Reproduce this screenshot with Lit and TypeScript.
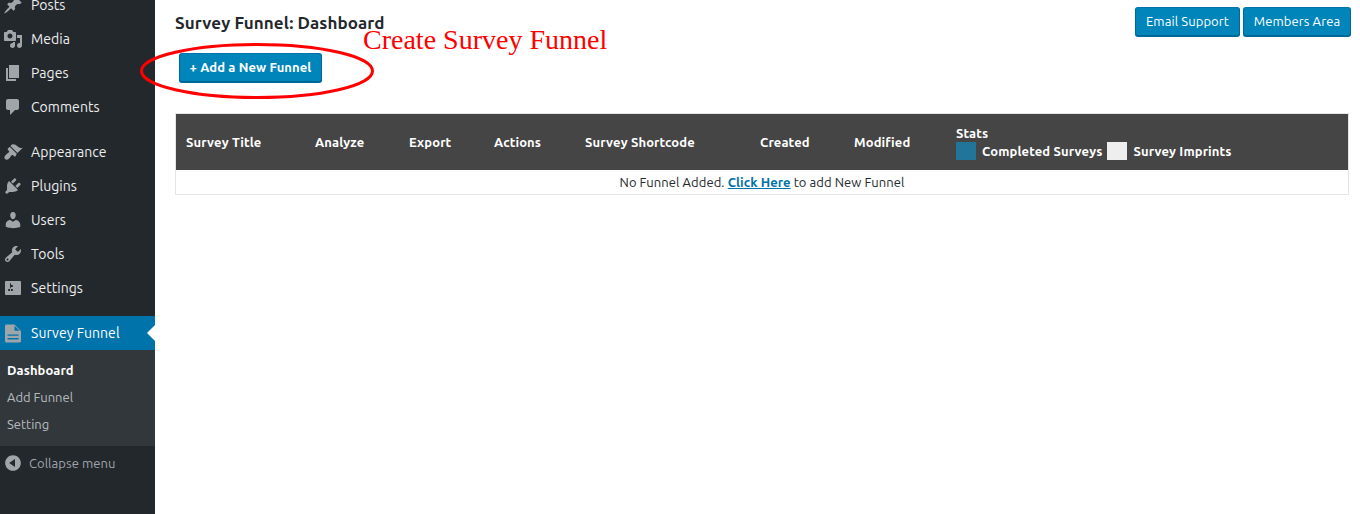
import { LitElement, html, css, svg } from "lit";
import { customElement } from "lit/decorators.js";

const ICONS: Record<string, string> = {
  post: "M10.44 3.02l1.82-1.82 6.36 6.35-1.83 1.82c-1.05-.68-2.48-.57-3.41.36l-.75.75c-.92.93-1.04 2.35-.35 3.41l-1.83 1.82-2.41-2.41-2.8 2.79c-.42.42-3.38 2.71-3.8 2.29s1.86-3.39 2.28-3.81l2.79-2.79L4.1 9.36l1.83-1.82c1.05.69 2.48.57 3.4-.36l.75-.75c.93-.92 1.05-2.35.36-3.41z",
  media: "M13 11V4c0-.55-.45-1-1-1h-1.67L9 1H5L3.67 3H2c-.55 0-1 .45-1 1v7c0 .55.45 1 1 1h10c.55 0 1-.45 1-1zM7 4.5c1.38 0 2.5 1.12 2.5 2.5S8.38 9.5 7 9.5 4.5 8.38 4.5 7 5.62 4.5 7 4.5zM14 6h5v10.5c0 1.38-1.12 2.5-2.5 2.5S14 17.88 14 16.5s1.12-2.5 2.5-2.5c.17 0 .34.02.5.05V9h-3V6zm-4 8.05V13h2v3.5c0 1.38-1.12 2.5-2.5 2.5S7 17.88 7 16.5 8.12 14 9.5 14c.17 0 .34.02.5.05z",
  page: "M6 15V2h10v13H6zm-1 1h8v2H3V5h2v11z",
  comments: "M5 2h9c1.1 0 2 .9 2 2v7c0 1.1-.9 2-2 2h-2l-5 5v-5H5c-1.1 0-2-.9-2-2V4c0-1.1.9-2 2-2z",
  appearance: "M14.48 11.06L7.41 3.99l1.5-1.5c.5-.56 2.3-.47 3.51.32 1.21.8 1.43 1.28 2.91 2.1 1.18.64 2.45 1.26 4.45.85zm-.71.71L6.7 4.7 4.93 6.47c-.39.39-.39 1.02 0 1.41l1.06 1.06c.39.39.39 1.03 0 1.42-.6.6-1.43 1.11-2.21 1.69-.35.26-.7.53-1.01.84-1.36 1.35-1.88 2.84-.69 4.18 1.19 1.19 2.68.67 4.04-.68.31-.31.58-.66.84-1.01.58-.78 1.09-1.61 1.69-2.21.39-.39 1.03-.39 1.42 0l1.06 1.06c.39.39 1.02.39 1.41 0z",
  plugins: "M13.11 4.36L9.87 7.6 8 5.73l3.24-3.24c.35-.34 1.05-.2 1.56.32.52.51.66 1.21.31 1.55zm-8 1.77l.91-1.12 9.01 9.01-1.19.84c-.71.71-2.63 1.16-3.82 1.16H6.14L4.9 17.26c-.59.59-1.54.59-2.12 0-.59-.58-.59-1.53 0-2.12l1.24-1.24v-3.88c0-1.13.4-3.19 1.09-3.89zm7.26 3.97l3.24-3.24c.34-.35 1.04-.21 1.55.31.52.51.66 1.21.31 1.55l-3.24 3.25z",
  users: "M10 9.25c-2.27 0-2.73-3.44-2.73-3.44C7 4.02 7.82 2 9.97 2c2.16 0 2.98 2.02 2.71 3.81 0 0-.41 3.44-2.68 3.44zm0 2.57L12.72 10c2.39 0 4.52 2.33 4.52 4.53v2.49s-3.65 1.13-7.24 1.13c-3.65 0-7.24-1.13-7.24-1.13v-2.49c0-2.25 1.94-4.48 4.47-4.48z",
  tools: "M16.68 9.77c-1.34 1.34-3.3 1.67-4.95.99l-5.41 6.52c-.99.99-2.59.99-3.58 0s-.99-2.59 0-3.57l6.52-5.42c-.68-1.65-.35-3.61.99-4.95 1.28-1.28 3.12-1.62 4.72-1.06l-2.89 2.89 2.82 2.82 2.86-2.87c.53 1.58.18 3.39-1.08 4.65zM3.81 16.21c.4.39 1.04.39 1.43 0 .4-.4.4-1.04 0-1.43-.39-.4-1.03-.4-1.43 0-.39.39-.39 1.03 0 1.43z",
  settings: "M18 16V4c0-.55-.45-1-1-1H3c-.55 0-1 .45-1 1v12c0 .55.45 1 1 1h14c.55 0 1-.45 1-1zM8 11h1c.55 0 1 .45 1 1s-.45 1-1 1H8v1.5c0 .28-.22.5-.5.5s-.5-.22-.5-.5V13H6c-.55 0-1-.45-1-1s.45-1 1-1h1V5.5c0-.28.22-.5.5-.5s.5.22.5.5V7h1c.55 0 1 .45 1 1s-.45 1-1 1h-1v5.5c0 .28-.22.5-.5.5s-.5-.22-.5-.5V9z",
  doc: "M3.5 1.500h8l6.500 6.500v10c0 .8-.7 1.500-1.500 1.500h-13c-.8 0-1.500-.7-1.500-1.500v-15c0-.8.7-1.500 1.500-1.500zM11.500 2.800v4.900h5.200zM4.500 11.400v1.400h11v-1.400zM4.500 15v1.400h11v-1.400z",
  collapse: "M10 2.160c4.330 0 7.840 3.510 7.840 7.840s-3.510 7.840-7.840 7.840S2.160 14.330 2.160 10 5.710 2.160 10 2.160zm2 11.720V6.120L6.180 9.970z",
};

const icon = (n: string) => html`<svg class="ic" viewBox="0 0 20 20" aria-hidden="true">${svg`<path fill-rule="evenodd" d=${ICONS[n]}></path>`}</svg>`;

const GROUP_A = [["post", "Posts"], ["media", "Media"], ["page", "Pages"], ["comments", "Comments"]];
const GROUP_B = [["appearance", "Appearance"], ["plugins", "Plugins"], ["users", "Users"], ["tools", "Tools"], ["settings", "Settings"]];
const COLS = ["Survey Title", "Analyze", "Export", "Actions", "Survey Shortcode", "Created", "Modified"];

@customElement("app-root")
export class AppRoot extends LitElement {
  static styles = css`
    :host { display: block; height: 514px; overflow: hidden; position: relative; background: #fff;
      font-family: Ubuntu, "Noto Sans", "Open Sans", sans-serif; font-size: 13px; color: #23282d; }
    .page { display: flex; height: 514px; }
    .side { width: 155px; flex: none; background: #23282d; margin-top: -12px; height: 526px; }
    .item { height: 34px; display: flex; align-items: center; color: #eee; font-size: 14px; letter-spacing: 0.05px; position: relative; }
    .ic { width: 20px; height: 20px; fill: #a0a5aa; margin-left: 3px; margin-right: 8px; flex: none; }
    .gap { height: 11px; }
    .cur { background: #0073aa; color: #fff; }
    .cur::after { content: ""; position: absolute; right: 0; top: 9px; border: 8px solid transparent; border-right-color: #fff; border-left: 0; }
    .sub { background: #32373c; padding: 7px 0; height: 96px; box-sizing: border-box; }
    .sub div { height: 27px; line-height: 26px; padding-left: 7px; color: rgba(240,245,250,.7); font-size: 13px; }
    .sub .on { color: #fff; font-weight: 700; letter-spacing: 0.08px; }
    .coll { display: flex; align-items: center; height: 34px; color: #a0a5aa; font-size: 13px; letter-spacing: 0.05px; }
    .coll .ic { margin-left: 3px; margin-right: 6px; }
    .main { flex: 1; padding: 7px 11px 0 20px; min-width: 0; }
    .top { display: flex; justify-content: space-between; height: 46px; }
    h1 { margin: 6px 0 0; font-size: 17px; line-height: 19px; font-weight: 700; letter-spacing: 0.08px; }
    .btns { display: flex; gap: 3px; margin-right: -2px; }
    .btn { height: 29px; box-sizing: border-box; padding-bottom: 2px; display: flex; align-items: center; justify-content: center; background: #0085ba;
      border: 1px solid; border-color: #0073aa #006799 #006799; border-radius: 3px; box-shadow: 0 1px 0 #006799; color: #fff; font-size: 13px; letter-spacing: 0.1px; }
    .email { width: 105px; }
    .members { width: 108px; }
    .add { width: 143px; margin-left: 4px; font-weight: 700; letter-spacing: 0.1px; }
    .tbl { margin-top: 31px; border: 1px solid #e5e5e5; }
    .head { display: grid; grid-template-columns: 129px 94px 85px 91px 175px 94px 102px 1fr; background: #454545; color: #fff; font-weight: 700; height: 56px; align-items: center; padding-left: 10px; letter-spacing: 0.13px; }
    .stats { padding-top: 2px; }
    .legend { display: flex; align-items: center; gap: 6px; margin-top: 2px; height: 18px; }
    .sw { width: 20px; height: 18px; flex: none; }
    .blue { background: #21759b; }
    .gray { background: #eee; margin-left: -1px; }
    .statlabel { line-height: 14px; }
    .row { height: 24px; line-height: 24px; text-align: center; letter-spacing: 0.07px; }
    .row a { color: #0073aa; font-weight: 700; text-decoration: underline; }
    .ring { position: absolute; left: 140px; top: 43px; width: 235px; height: 56px; pointer-events: none; }
    .note { position: absolute; left: 363px; top: 23px; font-family: "Liberation Serif", serif; font-size: 28px; line-height: 33px; color: #f00; white-space: nowrap; }
  `;

  render() {
    return html`
      <div class="page">
        <nav class="side">
          ${GROUP_A.map(([i, t]) => html`<div class="item">${icon(i)}${t}</div>`)}
          <div class="gap"></div>
          ${GROUP_B.map(([i, t]) => html`<div class="item">${icon(i)}${t}</div>`)}
          <div class="gap"></div>
          <div class="item cur">${icon("doc")}Survey Funnel</div>
          <div class="sub">
            <div class="on">Dashboard</div>
            <div>Add Funnel</div>
            <div>Setting</div>
          </div>
          <div class="coll">${icon("collapse")}Collapse menu</div>
        </nav>
        <main class="main">
          <div class="top">
            <h1>Survey Funnel: Dashboard</h1>
            <div class="btns">
              <div class="btn email">Email Support</div>
              <div class="btn members">Members Area</div>
            </div>
          </div>
          <div class="btn add">+ Add a New Funnel</div>
          <div class="tbl">
            <div class="head">
              ${COLS.map((c) => html`<div>${c}</div>`)}
              <div class="stats">
                <div class="statlabel">Stats</div>
                <div class="legend">
                  <span class="sw blue"></span><span>Completed Surveys</span>
                  <span class="sw gray"></span><span>Survey Imprints</span>
                </div>
              </div>
            </div>
            <div class="row">No Funnel Added. <a href="#">Click Here</a> to add New Funnel</div>
          </div>
        </main>
      </div>
      <svg class="ring" viewBox="0 0 235 56" aria-hidden="true">
        <ellipse cx="117" cy="28" rx="115.500" ry="26.500" fill="none" stroke="#f00" stroke-width="3"></ellipse>
      </svg>
      <div class="note">Create Survey Funnel</div>
    `;
  }
}
